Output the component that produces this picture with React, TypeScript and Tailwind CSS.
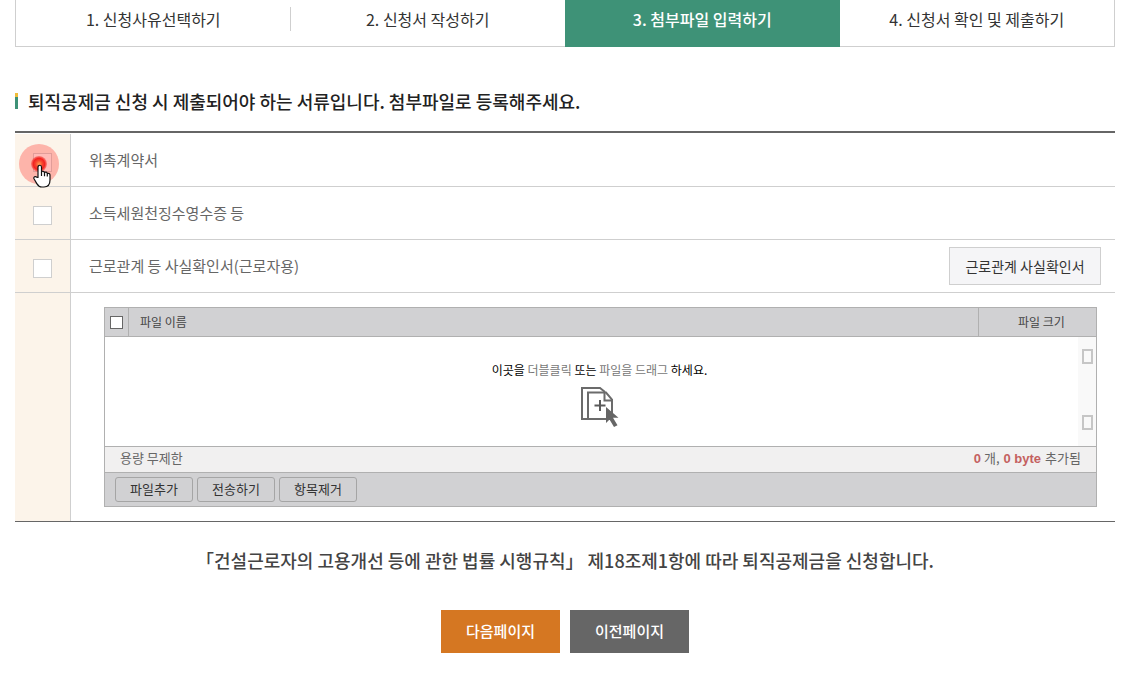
import { useState } from 'react';
import clsx from 'clsx';

interface Doc {
  id: string;
  name: string;
  form?: string;
}

const steps = [
  '1. 신청사유선택하기',
  '2. 신청서 작성하기',
  '3. 첨부파일 입력하기',
  '4. 신청서 확인 및 제출하기',
];

const docs: Doc[] = [
  { id: 'contract', name: '위촉계약서' },
  { id: 'receipt', name: '소득세원천징수영수증 등' },
  { id: 'relation', name: '근로관계 등 사실확인서(근로자용)', form: '근로관계 사실확인서' },
];

const fileActions = ['파일추가', '전송하기', '항목제거'];

function StepBar({ current }: { current: number }) {
  return (
    <ol className="grid grid-cols-4 border-x border-[#cfcfcf] text-base text-[#333]">
      {steps.map((step, i) => (
        <li
          key={step}
          className={clsx(
            'relative flex h-[47px] items-start justify-center border-b pt-[7px] leading-6',
            i === current
              ? 'border-[#3e9277] bg-[#3e9277] font-medium text-white'
              : 'border-[#cfcfcf]'
          )}
        >
          {step}
          {i === 0 && <span className="absolute top-[7px] right-0 h-6 w-px bg-[#cfcfcf]" />}
        </li>
      ))}
    </ol>
  );
}

function DropIcon() {
  return (
    <svg width="38" height="40" viewBox="0 0 38 40" fill="none">
      <path d="M6 32H1V1h18l5 4" stroke="#6b6b6b" strokeWidth="2" />
      <path d="M7 5.5h18l6 7V32H7z" fill="#fff" stroke="#6b6b6b" strokeWidth="2" />
      <path d="M23.5 5.5v8H31" stroke="#6b6b6b" strokeWidth="2" />
      <path d="M19 13v11M13.5 18.5h11" stroke="#5a5a5a" strokeWidth="2" />
      <path d="M25 20v16l3.500-3.500 4.500 7.500 3.500-1.700-4.500-7.600h5.500z" fill="#666" />
    </svg>
  );
}

function HandCursor() {
  return (
    <svg width="18" height="24" viewBox="0 0 18 24">
      <path
        d="M5 13.5V3.200C5 .6 8.500.6 8.500 3.200V8c.8-1.200 2.700-.9 3 .6 1-.9 2.600-.5 2.800.9 1.300-.6 2.700.2 2.700 1.600V16c0 4.200-2.200 7-6 7H9c-2.400 0-4-1.200-5.200-3.400L1 14.800c-.7-1.800 1.300-3 2.600-1.700z"
        fill="#fff"
        stroke="#111"
        strokeWidth="1.2"
        strokeLinejoin="round"
      />
      <path d="M8.500 8v4M11.500 8.600v3.600M14.300 9.500v3" stroke="#111" strokeWidth="1.2" />
    </svg>
  );
}

function ClickMark() {
  return (
    <span className="pointer-events-none absolute top-[10px] left-1 z-10 size-10">
      <span className="absolute inset-0 rounded-full bg-[#ff4b43]/38" />
      <span className="absolute top-3 left-3 size-4 rounded-full bg-[radial-gradient(circle,#ff9a4d_0%,#f6452f_30%,#f2221f_50%,#fa5f5566_75%)]" />
      <span className="absolute top-5 left-[14px]">
        <HandCursor />
      </span>
    </span>
  );
}

function FileBox() {
  const [allChecked, setAllChecked] = useState(false);

  return (
    <div className="border border-[#b0b0b0] text-xs text-[#444]">
      <table className="w-full table-fixed border-separate border-spacing-0">
        <thead>
          <tr className="bg-[#d1d1d3]">
            <th className="h-[29px] w-6 border-r border-b border-[#b0b0b0] p-0">
              <input
                type="checkbox"
                aria-label="전체 선택"
                checked={allChecked}
                onChange={(e) => setAllChecked(e.target.checked)}
                className="mx-auto block size-[13px] appearance-none border border-[#666] bg-white checked:bg-[#666]"
              />
            </th>
            <th className="border-b border-[#b0b0b0] p-0 pl-[11px] text-left font-normal">파일 이름</th>
            <th className="w-[118px] border-b border-l border-[#b0b0b0] p-0 pl-2 text-center font-normal">
              파일 크기
            </th>
          </tr>
        </thead>
      </table>

      <div className="flex h-[109px] bg-white">
        <div className="flex flex-1 flex-col items-center pt-6 pl-4">
          <p className="leading-[18px] text-[#777]">
            <span className="text-black">이곳을</span> 더블클릭{' '}
            <span className="text-black">또는</span> 파일을 드래그{' '}
            <span className="text-black">하세요.</span>
          </p>
          <div className="mt-2">
            <DropIcon />
          </div>
        </div>
        <div className="flex w-[18px] flex-col items-center justify-between bg-[#f9f9f9] pt-3 pb-4">
          <button type="button" aria-label="위로" className="h-[15px] w-[11px] border-2 border-[#c6c6c6]" />
          <button type="button" aria-label="아래로" className="h-[15px] w-[11px] border-2 border-[#c6c6c6]" />
        </div>
      </div>

      <div className="flex h-[27px] items-center justify-between border-y border-[#b0b0b0] bg-[#f1f0f0] px-[15px] pb-[3px] text-[13px] leading-5 text-[#666]">
        <span>용량 무제한</span>
        <span className="flex items-baseline gap-1">
          <span>
            <b className="font-['Liberation_Sans',sans-serif] text-[#c4605f]">0</b> 개,
          </span>
          <b className="font-['Liberation_Sans',sans-serif] text-[#c4605f]">0 byte</b>
          <span>추가됨</span>
        </span>
      </div>

      <div className="flex h-[33px] items-center gap-1 bg-[#d1d1d3] px-[10px]">
        {fileActions.map((action) => (
          <button
            key={action}
            type="button"
            className="h-[25px] w-[78px] rounded-[3px] border border-[#a5a5a5] pb-px text-[13px] leading-5 text-[#333]"
          >
            {action}
          </button>
        ))}
      </div>
    </div>
  );
}

export default function App() {
  const [checked, setChecked] = useState<string[]>([]);

  const toggle = (id: string) => {
    setChecked((prev) => (prev.includes(id) ? prev.filter((v) => v !== id) : [...prev, id]));
  };

  return (
    <div className="min-h-screen bg-white pr-[27px] pb-8 pl-[15px] font-['Noto_Sans_CJK_KR',sans-serif]">
      <StepBar current={2} />

      <h2 className="mt-[39px] flex items-center gap-[10px] text-lg leading-[30px] font-medium text-[#222]">
        <span className="h-4 w-[3px] border-t-4 border-[#f0bd3a] bg-[#3e9277]" />
        퇴직공제금 신청 시 제출되어야 하는 서류입니다. 첨부파일로 등록해주세요.
      </h2>

      <div className="mt-[15px] border-t-2 border-b border-[#666] pt-px">
        <table className="w-full table-fixed border-separate border-spacing-0 text-[15px] text-[#666]">
          <tbody>
            {docs.map((doc, i) => (
              <tr key={doc.id}>
                <td className="relative h-[53px] w-14 border-r border-b border-[#cfcfcf] bg-[#fcf4ea] p-0">
                  <input
                    id={doc.id}
                    type="checkbox"
                    checked={checked.includes(doc.id)}
                    onChange={() => toggle(doc.id)}
                    className="mx-auto mt-1 block size-[19px] appearance-none border border-[#cfcfcf] bg-white checked:bg-[#3e9277]"
                  />
                  {i === 0 && <ClickMark />}
                </td>
                <td className="border-b border-[#cfcfcf] p-0 pr-[14px] pl-[18px]">
                  <div className="flex items-center justify-between">
                    <label htmlFor={doc.id}>{doc.name}</label>
                    {doc.form && (
                      <button
                        type="button"
                        className="h-[38px] w-[152px] border border-[#cfcfcf] bg-[#f5f5f7] text-sm text-[#333]"
                      >
                        {doc.form}
                      </button>
                    )}
                  </div>
                </td>
              </tr>
            ))}
            <tr>
              <td className="border-r border-[#cfcfcf] bg-[#fcf4ea] p-0" />
              <td className="p-0 pt-[14px] pr-[18px] pb-[14px] pl-[33px]">
                <FileBox />
              </td>
            </tr>
          </tbody>
        </table>
      </div>

      <p className="mt-6 text-center text-lg leading-7 font-medium text-[#444]">
        「건설근로자의 고용개선 등에 관한 법률 시행규칙」 제18조제1항에 따라 퇴직공제금을 신청합니다.
      </p>

      <div className="mt-9 flex justify-center gap-[10px] text-[15px] font-medium text-white">
        <button type="button" className="h-[43px] w-[119px] bg-[#d57722]">
          다음페이지
        </button>
        <button type="button" className="h-[43px] w-[119px] bg-[#666]">
          이전페이지
        </button>
      </div>
    </div>
  );
}
